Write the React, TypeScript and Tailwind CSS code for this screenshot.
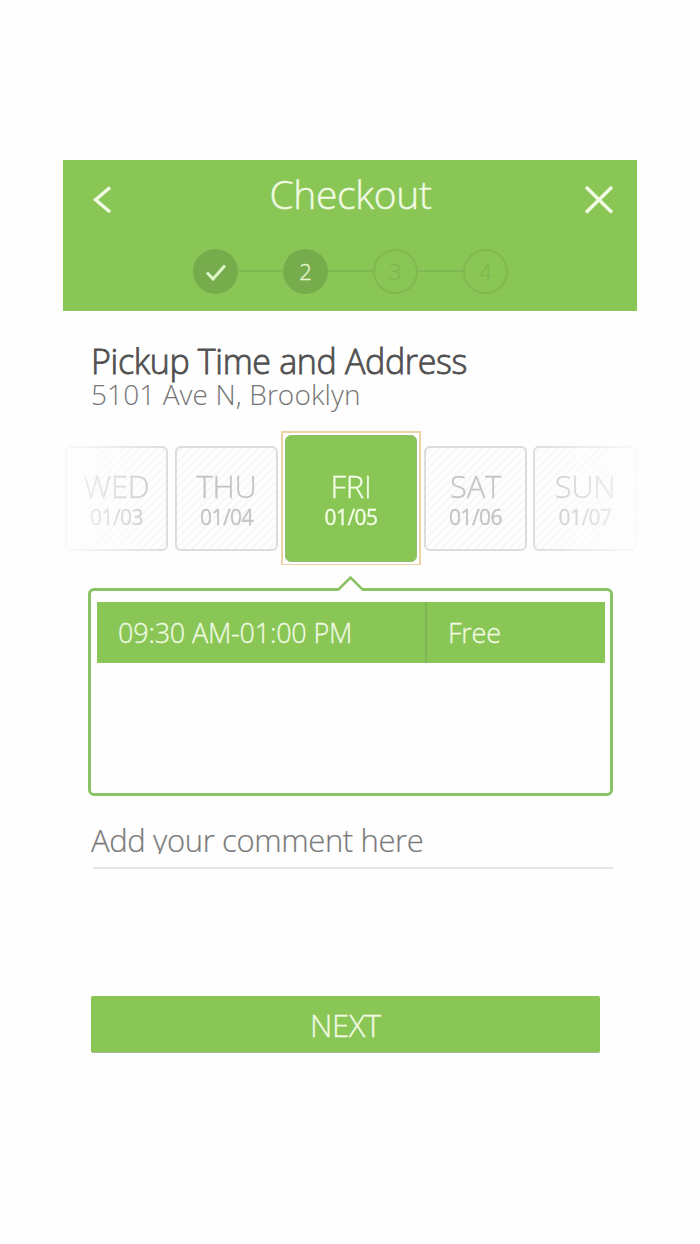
import React from "react";

const days = [
  { name: "WED", date: "01/03", box: "w-[103px] mr-[7px]" },
  { name: "THU", date: "01/04", box: "w-[103px] mr-[3px]" },
  { name: "FRI", date: "01/05", box: "", selected: true },
  { name: "SAT", date: "01/06", box: "w-[103px] ml-[3px] mr-[6px]" },
  { name: "SUN", date: "01/07", box: "w-[104px]" },
];

function Day({ name, date, box, selected }: { name: string; date: string; box: string; selected?: boolean }) {
  const label = (
    <>
      <div className="h-[32px] text-[31px] leading-[32px] font-light tracking-[-0.3px] whitespace-nowrap [-webkit-text-stroke:0.3px]">{name}</div>
      <div className="h-[30px] text-[21px] leading-[30px] tracking-[-0.5px] whitespace-nowrap [-webkit-text-stroke:0.3px]">{date}</div>
    </>
  );
  if (selected) {
    return (
      <div className="flex h-[135px] w-[140px] shrink-0 border-2 border-[#ecd3a4] bg-white p-[2px]">
        <div className="flex h-[127px] w-[132px] flex-col items-center rounded-[6px] border border-[#93bd72] bg-[#8ac656] pt-[34px] text-[#f4ffe8]">
          {label}
        </div>
      </div>
    );
  }
  return (
    <div
      className={`flex h-[105px] shrink-0 flex-col items-center rounded-[6px] border-2 border-[#dcdcdc] bg-[repeating-linear-gradient(135deg,#fefefe_0px,#fefefe_2px,#f6f6f6_4px,#fefefe_6px)] pt-[22px] text-[#c4c4c4] ${box}`}
    >
      {label}
    </div>
  );
}

function Connector() {
  return <div className="mb-px h-[2px] w-[45px] bg-[#7fb951]" />;
}

export default function App() {
  return (
    <div className="h-[1244px] w-[700px] overflow-hidden bg-[#fefefe] pt-[160px] pl-[63px] font-['Open_Sans',sans-serif]">
      <main className="flex w-[574px] flex-col">
        <header className="h-[151px] bg-[#8ac656] text-[#f1fbe4]">
          <div className="flex h-[80px] items-start justify-between pr-[22px] pl-[29px]">
            <svg className="mt-[24px] h-[32px] w-[22px]" viewBox="0 0 22 32" fill="none" stroke="currentColor" strokeWidth="3.4">
              <path d="M18 3.500 3.500 15.700 18 28" />
            </svg>
            <h1 className="mt-[9px] ml-[4px] h-[50px] text-[39px] leading-[50px] font-light tracking-[-0.350px] whitespace-nowrap [-webkit-text-stroke:0.4px]">Checkout</h1>
            <svg className="mt-[24px] h-[32px] w-[32px]" viewBox="0 0 32 32" fill="none" stroke="currentColor" strokeWidth="3.400">
              <path d="M3 3 29 28.500M29 3 3 28.500" />
            </svg>
          </div>
          <div className="flex h-[63px] items-center justify-center pl-px text-[22px] leading-[44px]">
            <div className="flex size-[45px] items-center justify-center rounded-full bg-[#76ac4c]">
              <svg className="h-[20px] w-[24px]" viewBox="0 0 24 20" fill="none" stroke="#dcf4c6" strokeWidth="3">
                <path d="M3 10.500 9 17 21 3.500" />
              </svg>
            </div>
            <Connector />
            <div className="flex size-[45px] items-center justify-center rounded-full bg-[#76ac4c] pb-px font-light text-[#e2f6cf] [-webkit-text-stroke:0.4px]">2</div>
            <Connector />
            <div className="flex size-[45px] items-center justify-center rounded-full border-2 border-[#7fb951] pb-px font-light text-[#7db74f] [-webkit-text-stroke:0.3px]">3</div>
            <Connector />
            <div className="flex size-[45px] items-center justify-center rounded-full border-2 border-[#7fb951] pb-px font-light text-[#7db74f] [-webkit-text-stroke:0.3px]">4</div>
          </div>
        </header>

        <section className="h-[120px] pt-[30px] pl-[28px]">
          <h2 className="h-[39px] text-[34px] leading-[40px] font-light tracking-[-0.350px] whitespace-nowrap text-[#505050] [-webkit-text-stroke:0.8px]">Pickup Time and Address</h2>
          <p className="h-[30px] text-[28px] leading-[29px] font-light tracking-[0.100px] whitespace-nowrap text-[#757575]">5101 Ave N, Brooklyn</p>
        </section>

        <div className="flex h-[134px] items-center pl-[2px] [mask-image:linear-gradient(to_right,rgba(0,0,0,0.12),black_19%,black_81%,rgba(0,0,0,0.12))]">
          {days.map((d) => (
            <Day key={d.name} {...d} />
          ))}
        </div>

        <section className="relative mt-[23px] ml-[25px] h-[208px] w-[525px] rounded-[6px] border-[3px] border-[#8ac363] px-[6px] pt-[11px]">
          <svg className="absolute -top-[17px] left-[245px] h-[18px] w-[30px]" viewBox="0 0 30 18" fill="none">
            <path d="M2 16 14.500 3 27 16V18H2Z" fill="#fefefe" />
            <path d="M1 15.500H2.500L14.500 3.500 26.500 15.500H28" stroke="#8ac363" strokeWidth="2.600" />
          </svg>
          <div className="flex h-[61px] w-[508px] bg-[#8ac656] text-[27px] leading-[61px] font-light whitespace-nowrap text-[#f1fbe4] [-webkit-text-stroke:0.3px]">
            <div className="w-[330px] border-r-2 border-[#7eb454] pl-[21px] tracking-[-0.200px]">09:30 AM-01:00 PM</div>
            <div className="pl-[21px] tracking-[-0.250px]">Free</div>
          </div>
        </section>

        <div className="mt-[27px] ml-[28px] h-[31px] overflow-hidden text-[31px] leading-[34px] font-light tracking-[-0.370px] whitespace-nowrap text-[#7a7a7a] [-webkit-text-stroke:0.2px]">
          Add your comment here
        </div>
        <div className="mt-[13px] ml-[30px] h-[2px] w-[520px] bg-[#e4e4e4]" />

        <button className="mt-[127px] ml-[28px] h-[57px] w-[509px] rounded-[2px] border-b border-[#a5b795] bg-[#8ac656] pt-[2px] text-[31px] leading-[54px] font-light tracking-[-0.400px] text-[#f1fbe4] [-webkit-text-stroke:0.3px]">
          NEXT
        </button>
      </main>
    </div>
  );
}
